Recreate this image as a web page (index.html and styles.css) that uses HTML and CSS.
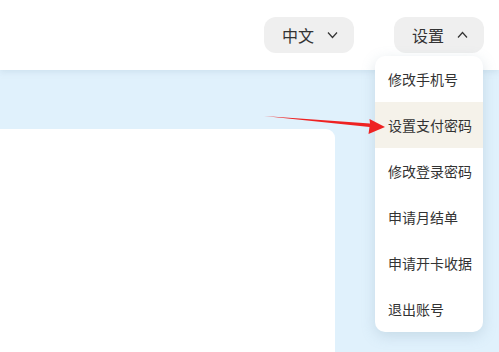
FILE: index.html
```html
<!DOCTYPE html>
<html lang="zh">

<head>
  <meta charset="UTF-8" />
  <meta name="viewport" content="width=device-width, initial-scale=1.0" />
  <title>设置</title>
  <link rel="stylesheet" href="styles.css">
</head>

<body>
  <div class="header">
    <div class="pill">
      <span>中文</span>
      <svg class="chev" width="11" height="8" viewBox="0 0 11 8"><path d="M1 1.5 L5.5 6.5 L10 1.5" fill="none" stroke="#333" stroke-width="1.2" /></svg>
    </div>
    <div class="pill">
      <span>设置</span>
      <svg class="chev" width="11" height="8" viewBox="0 0 11 8"><path d="M1 6.5 L5.5 1.5 L10 6.5" fill="none" stroke="#333" stroke-width="1.2" /></svg>
    </div>
  </div>

  <div class="main">
    <div class="card"></div>
  </div>

  <ul class="menu">
    <li>修改手机号</li>
    <li class="active">设置支付密码</li>
    <li>修改登录密码</li>
    <li>申请月结单</li>
    <li>申请开卡收据</li>
    <li>退出账号</li>
  </ul>

  <!-- annotation arrow -->
  <svg class="arrow" width="499" height="352" viewBox="0 0 499 352">
    <polygon points="264,116 370,123.4 369.5,119 385,127 368.5,134 369.5,127" fill="#ee2222" />
  </svg>
</body>

</html>
```

FILE: styles.css
```css
* {
  box-sizing: border-box;
}

body {
  margin: 0;
  height: 352px;
  overflow: hidden;
  font-family: "Noto Sans CJK SC", "Noto Sans", sans-serif;
  color: #333;
  background: #e0f1fc;
}

.header {
  height: 70px;
  background: #fff;
  display: flex;
  justify-content: flex-end;
  align-items: flex-start;
  gap: 40px;
  padding: 17px 15px 0 0;
  box-shadow: 0 2px 6px rgba(150, 180, 200, 0.25);
  position: relative;
}

.pill {
  width: 90px;
  height: 36px;
  border-radius: 12px;
  background: #efefef;
  display: flex;
  align-items: center;
  padding-left: 18px;
  font-size: 16px;
}

.chev {
  margin-left: 13px;
}

.main {
  padding-top: 59px;
}

.card {
  width: 335px;
  height: 240px;
  background: #fff;
  border-radius: 0 9px 0 0;
}

.menu {
  position: absolute;
  top: 56px;
  left: 375px;
  width: 108px;
  margin: 0;
  padding: 0;
  list-style: none;
  background: #fff;
  border-radius: 10px;
  overflow: hidden;
  box-shadow: 0 4px 14px rgba(120, 150, 170, 0.25);
}

.menu li {
  height: 46px;
  display: flex;
  align-items: center;
  padding-left: 13px;
  font-size: 14px;
  white-space: nowrap;
}

.menu li.active {
  background: #f5f2ea;
}

.arrow {
  position: absolute;
  top: 0;
  left: 0;
  pointer-events: none;
}
```
